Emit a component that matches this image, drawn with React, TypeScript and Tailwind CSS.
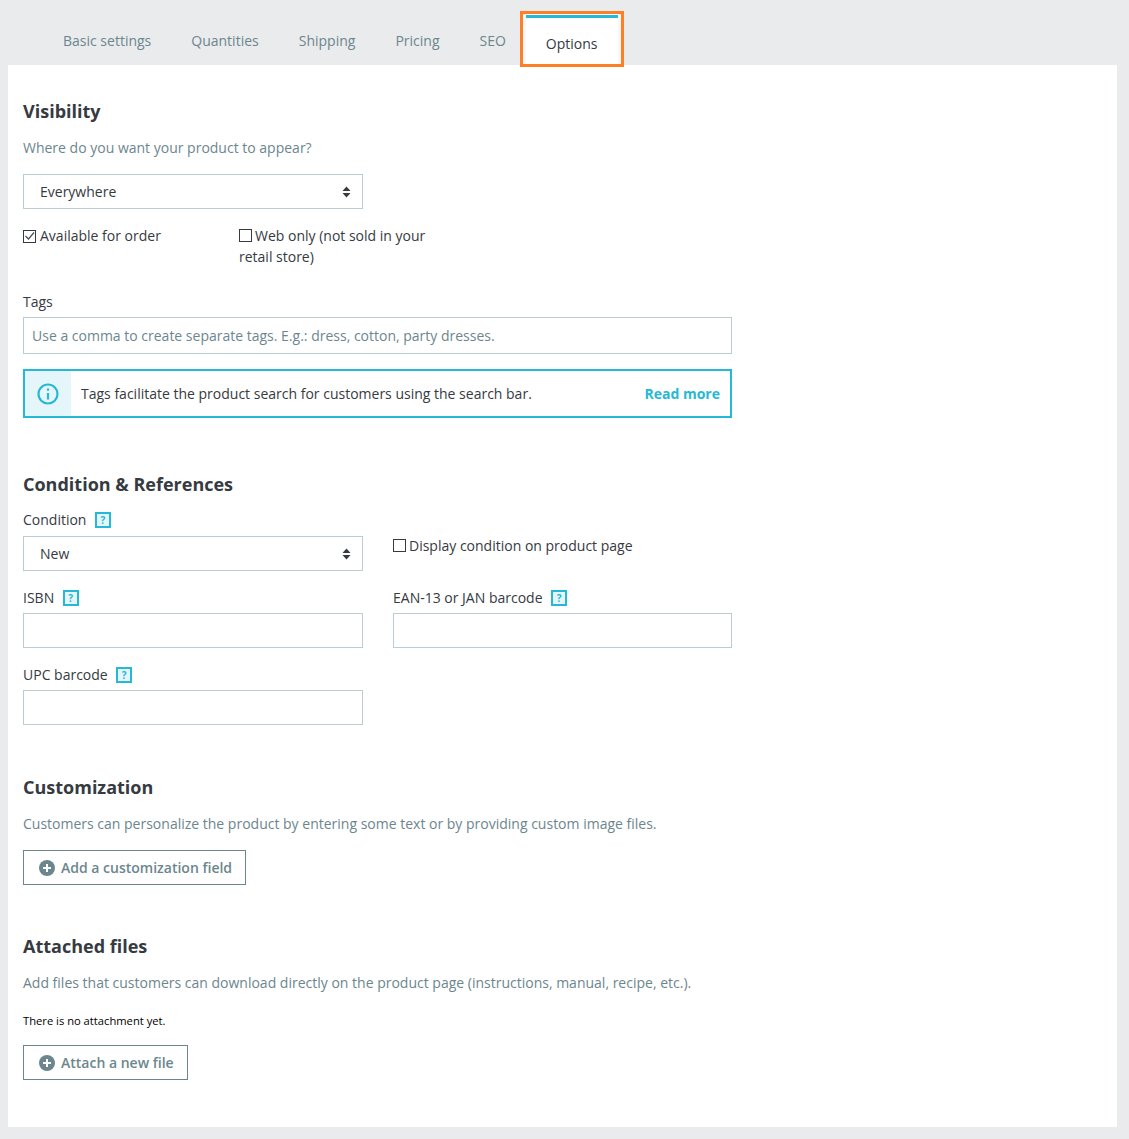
import type { ReactNode } from "react"

const font = "font-['Open_Sans',sans-serif]"

function Help() {
  return (
    <span className="ml-[8.5px] inline-flex h-4 w-4 items-center justify-center border-2 border-[#25b9d7] bg-[#e5f6fa] text-[10px] font-bold leading-none text-[#25b9d7]">
      ?
    </span>
  )
}

function SelectBox({ value }: { value: string }) {
  return (
    <div className="flex h-[35px] w-[340px] items-center justify-between border border-[#bbcdd2] bg-white pl-4 pr-[11px] text-[#363a41]">
      <span>{value}</span>
      <svg width="9" height="12" viewBox="0 0 9 12" fill="#363a41">
        <path d="M4.5 0.5 8.5 5H0.5z" />
        <path d="M4.5 11.5 0.5 7H8.5z" />
      </svg>
    </div>
  )
}

function Box({ checked }: { checked?: boolean }) {
  return (
    <span
      className={`inline-flex h-[13px] w-[13px] items-center justify-center border border-[#363a41] bg-white align-[-1px] ${
        checked ? "mr-[4px]" : "mr-[3px]"
      }`}
    >
      {checked && (
        <svg width="11" height="11" viewBox="0 0 11 11" fill="none" stroke="#4a4f57" strokeWidth="1.2">
          <path d="M1.5 5 4.5 8 10 1.5" />
        </svg>
      )}
    </span>
  )
}

function Field({ label, width = "w-[340px]" }: { label: ReactNode; width?: string }) {
  return (
    <div className={width}>
      <div className="flex h-[21px] items-center text-[#363a41]">{label}</div>
      <div className="mt-[5px] h-[35px] border border-[#bbcdd2] bg-white" />
    </div>
  )
}

function OutlineButton({ children }: { children: string }) {
  return (
    <button className="flex h-[35px] items-center gap-[6px] border border-[#6c868e] bg-white pl-[15px] pr-[13px] font-semibold text-[#6c868e]">
      <svg width="16" height="16" viewBox="0 0 16 16">
        <circle cx="8" cy="8" r="8" fill="#6c868e" />
        <path d="M8 4v8M4 8h8" stroke="#fff" strokeWidth="2" />
      </svg>
      {children}
    </button>
  )
}

function Tab({ label }: { label: string }) {
  return <div className="px-5 pb-[14px] pt-[31px] leading-[20px] text-[#6c868e]">{label}</div>
}

export default function App() {
  return (
    <div className={`${font} min-h-[1139px] bg-[#eaebec] text-[14px] leading-[21px]`}>
      {/* Tabs */}
      <div className="flex h-[65px] items-start pl-[43px]">
        <Tab label="Basic settings" />
        <Tab label="Quantities" />
        <Tab label="Shipping" />
        <Tab label="Pricing" />
        <Tab label="SEO" />
        <div className="relative mt-[15px] h-[50px] border-t-[3px] border-[#25b9d7] bg-white px-5 pt-[16px] leading-[20px] text-[#363a41] shadow-[-3px_0_0_#f7f8f8,3px_0_0_#f7f8f8,0_-1px_0_#f7f8f8]">
          Options
          <span className="absolute -bottom-[2px] -left-[6px] -right-[6px] -top-[7px] border-[3px] border-[#ff7f27]" />
        </div>
      </div>

      {/* Panel */}
      <div className="mx-2 w-[1109px] bg-white pb-[47px] pl-[15px] pt-[33px]">
        <h2 className="text-[18px] font-bold leading-[27px] text-[#363a41]">Visibility</h2>
        <p className="mt-[12px] text-[#6c868e]">Where do you want your product to appear?</p>
        <div className="mt-[16px]">
          <SelectBox value="Everywhere" />
        </div>
        <div className="mt-[16px] flex text-[#363a41]">
          <div className="w-[216px]">
            <Box checked />
            Available for order
          </div>
          <div className="w-[200px]">
            <Box />
            Web only (not sold in your retail store)
          </div>
        </div>

        <div className="mt-[24px] text-[#363a41]">Tags</div>
        <div className="mt-[5px] flex h-[37px] w-[709px] items-center border border-[#bbcdd2] px-2 text-[#6c868e]">
          Use a comma to create separate tags. E.g.: dress, cotton, party dresses.
        </div>
        <div className="mt-[15px] flex h-[49px] w-[709px] items-stretch border-2 border-[#25b9d7]">
          <div className="flex w-[46px] items-center justify-center bg-[#e5f6fa]">
            <svg width="22" height="22" viewBox="0 0 22 22" fill="none" stroke="#25b9d7" strokeWidth="2.2">
              <circle cx="11" cy="11" r="9.5" />
              <path d="M11 10v6.5" />
              <path d="M11 5.5v2.2" />
            </svg>
          </div>
          <div className="flex flex-1 items-center justify-between pl-[10px] pr-[10px] text-[#363a41]">
            <span>Tags facilitate the product search for customers using the search bar.</span>
            <span className="font-bold text-[#25b9d7]">Read more</span>
          </div>
        </div>

        <h2 className="mt-[53px] text-[18px] font-bold leading-[27px] text-[#363a41]">Condition &amp; References</h2>
        <div className="mt-[11px] flex h-[21px] items-center text-[#363a41]">
          Condition
          <Help />
        </div>
        <div className="mt-[6px] flex gap-[30px]">
          <SelectBox value="New" />
          <div className="-mt-[1px] text-[#363a41]">
            <Box />
            Display condition on product page
          </div>
        </div>
        <div className="mt-[16px] flex gap-[30px]">
          <Field
            label={
              <>
                ISBN
                <Help />
              </>
            }
          />
          <Field
            width="w-[339px]"
            label={
              <>
                EAN-13 or JAN barcode
                <Help />
              </>
            }
          />
        </div>
        <div className="mt-[16px]">
          <Field
            label={
              <>
                UPC barcode
                <Help />
              </>
            }
          />
        </div>

        <h2 className="mt-[49px] text-[18px] font-bold leading-[27px] text-[#363a41]">Customization</h2>
        <p className="mt-[12px] text-[#6c868e]">
          Customers can personalize the product by entering some text or by providing custom image files.
        </p>
        <div className="mt-[16px] flex">
          <OutlineButton>Add a customization field</OutlineButton>
        </div>

        <h2 className="mt-[48px] text-[18px] font-bold leading-[27px] text-[#363a41]">Attached files</h2>
        <p className="mt-[12px] text-[#6c868e]">
          Add files that customers can download directly on the product page (instructions, manual, recipe, etc.).
        </p>
        <p className="mt-[20px] text-[11.2px] leading-[16px] text-[#000]">There is no attachment yet.</p>
        <div className="mt-[16px] flex">
          <OutlineButton>Attach a new file</OutlineButton>
        </div>
      </div>
    </div>
  )
}
